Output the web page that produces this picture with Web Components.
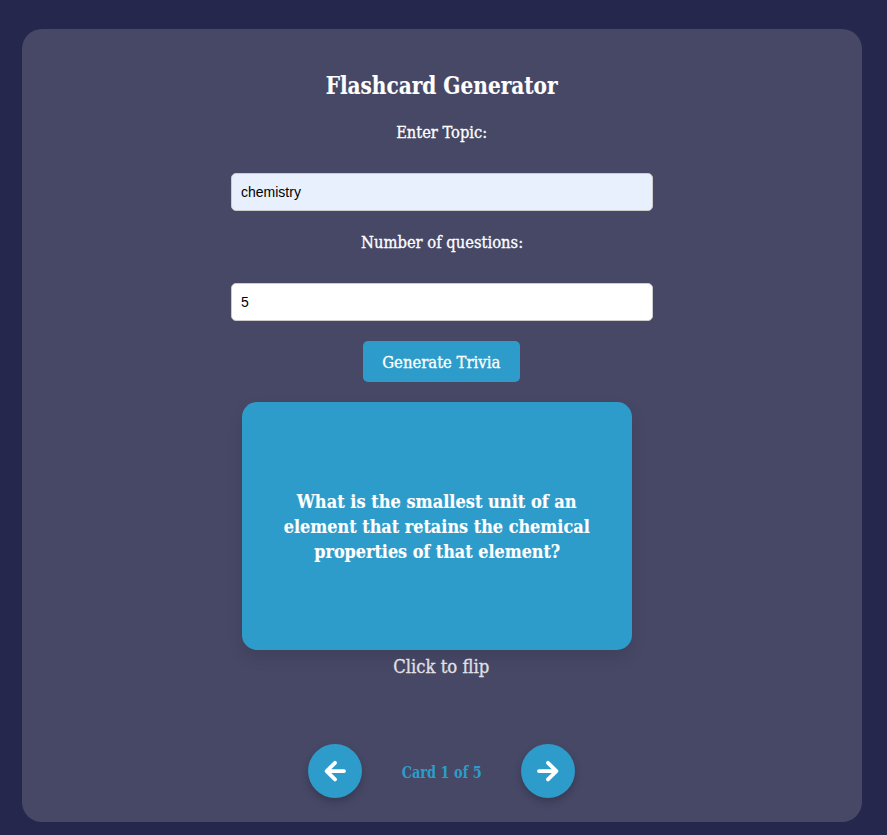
<!DOCTYPE html>
<html lang="en">
<head>
<meta charset="utf-8">
<title>Flashcard Generator</title>
<style>
  html, body { margin: 0; background: #25274d; }
  body { box-sizing: border-box; height: 835px; overflow: hidden; padding: 29px 25px 13px 22px; color: #fff; font: 16px "Roboto Slab", "DejaVu Serif Condensed", "DejaVu Serif", serif; }
</style>
</head>
<body>
<flashcard-app></flashcard-app>
<script>
// A line of slab text, condensed horizontally to the width given.
customElements.define('slab-line', class extends HTMLElement {
  connectedCallback() {
    const root = this.attachShadow({ mode: 'open' });
    root.innerHTML = `<style>
      :host { display: flex; justify-content: center; white-space: nowrap; -webkit-text-stroke: var(--weight, .3px) currentColor; }
      span { flex: none; display: block; transform-origin: center; }
    </style><span><slot></slot></span>`;
    const span = root.querySelector('span');
    const natural = span.getBoundingClientRect().width;
    if (natural) span.style.transform = `scaleX(${Number(this.getAttribute('fit')) / natural})`;
  }
});

customElements.define('form-field', class extends HTMLElement {
  connectedCallback() {
    const root = this.attachShadow({ mode: 'open' });
    root.innerHTML = `<style>
      :host { display: flex; flex-direction: column; align-items: center; width: 422px; height: 89px; justify-content: space-between; }
      label { font-size: 16px; line-height: 22px; }
      input { box-sizing: border-box; width: 422px; height: 38px; padding: 10px 9px; border: 1px solid #ccc; border-radius: 5px; outline: 0; color: #000; background: var(--field, #fff); font: 14px "Liberation Sans", Arial, sans-serif; }
    </style><label><slot></slot></label><input type="text">`;
    root.querySelector('input').value = this.getAttribute('value');
  }
});

customElements.define('action-button', class extends HTMLElement {
  connectedCallback() {
    this.attachShadow({ mode: 'open' }).innerHTML = `<style>
      :host { display: block; width: 157px; height: 41px; }
      button { width: 100%; height: 100%; display: flex; align-items: center; justify-content: center; padding: 2px 0 0; border: 0; border-radius: 5px; background: #2e9cca; color: #fff; font: inherit; font-size: 16px; line-height: 21px; }
    </style><button><slot></slot></button>`;
  }
});

customElements.define('flash-card', class extends HTMLElement {
  connectedCallback() {
    this.attachShadow({ mode: 'open' }).innerHTML = `<style>
      :host { box-sizing: border-box; display: flex; flex-direction: column; align-items: center; justify-content: center; width: 390px; height: 248px; border-radius: 15px; background: #2e9cca; box-shadow: 0 8px 16px rgba(0,0,0,.1); font-size: 19px; font-weight: bold; line-height: 25px; }
    </style><slot></slot>`;
  }
});

customElements.define('nav-button', class extends HTMLElement {
  connectedCallback() {
    const flip = this.getAttribute('dir') === 'next' ? 'transform: scaleX(-1);' : '';
    this.attachShadow({ mode: 'open' }).innerHTML = `<style>
      :host { display: block; width: 54px; height: 54px; }
      button { width: 100%; height: 100%; padding: 0; border: 0; border-radius: 50%; background: #2e9cca; box-shadow: 0 4px 8px rgba(0,0,0,.2); display: flex; align-items: center; justify-content: center; }
      svg { display: block; ${flip} }
    </style><button><svg width="54" height="54" viewBox="0 0 54 54" fill="none" stroke="#fff" stroke-width="3.8" stroke-linecap="round" stroke-linejoin="round"><path d="M27 18.8 18.6 27.1 27 35.4M19 27.1H36"/></svg></button>`;
  }
});

customElements.define('flashcard-app', class extends HTMLElement {
  connectedCallback() {
    this.attachShadow({ mode: 'open' }).innerHTML = `<style>
      :host { box-sizing: border-box; display: flex; flex-direction: column; align-items: center; width: 840px; height: 793px; padding-top: 41px; border-radius: 20px; background: #464866; }
      h1 { margin: 0 1px 20px 0; font-size: 24px; line-height: 32px; --weight: .15px; }
      form-field { margin-bottom: 20px; }
      .topic { --field: #e8f0fe; margin-bottom: 21px; }
      action-button { margin: 0 1px 20px 0; }
      flash-card { margin-right: 10px; --weight: .15px; }
      .hint { margin: 4px 1px 0 0; font-size: 18px; line-height: 25px; color: #e0e0e6; }
      nav { display: flex; align-items: center; margin: 65px 1px 0 0; }
      .count { width: 159px; padding-top: 3px; color: #2e9cca; font-size: 16px; font-weight: bold; line-height: 21px; --weight: 0px; }
    </style>
    <h1><slab-line fit="232">Flashcard Generator</slab-line></h1>
    <form-field class="topic" value="chemistry"><slab-line fit="91">Enter Topic:</slab-line></form-field>
    <form-field value="5"><slab-line fit="162">Number of questions:</slab-line></form-field>
    <action-button><slab-line fit="118">Generate Trivia</slab-line></action-button>
    <flash-card>
      <slab-line fit="280">What is the smallest unit of an</slab-line>
      <slab-line fit="306">element that retains the chemical</slab-line>
      <slab-line fit="246">properties of that element?</slab-line>
    </flash-card>
    <slab-line class="hint" fit="96">Click to flip</slab-line>
    <nav>
      <nav-button dir="prev"></nav-button>
      <slab-line class="count" fit="80">Card 1 of 5</slab-line>
      <nav-button dir="next"></nav-button>
    </nav>`;
  }
});
</script>
</body>
</html>
